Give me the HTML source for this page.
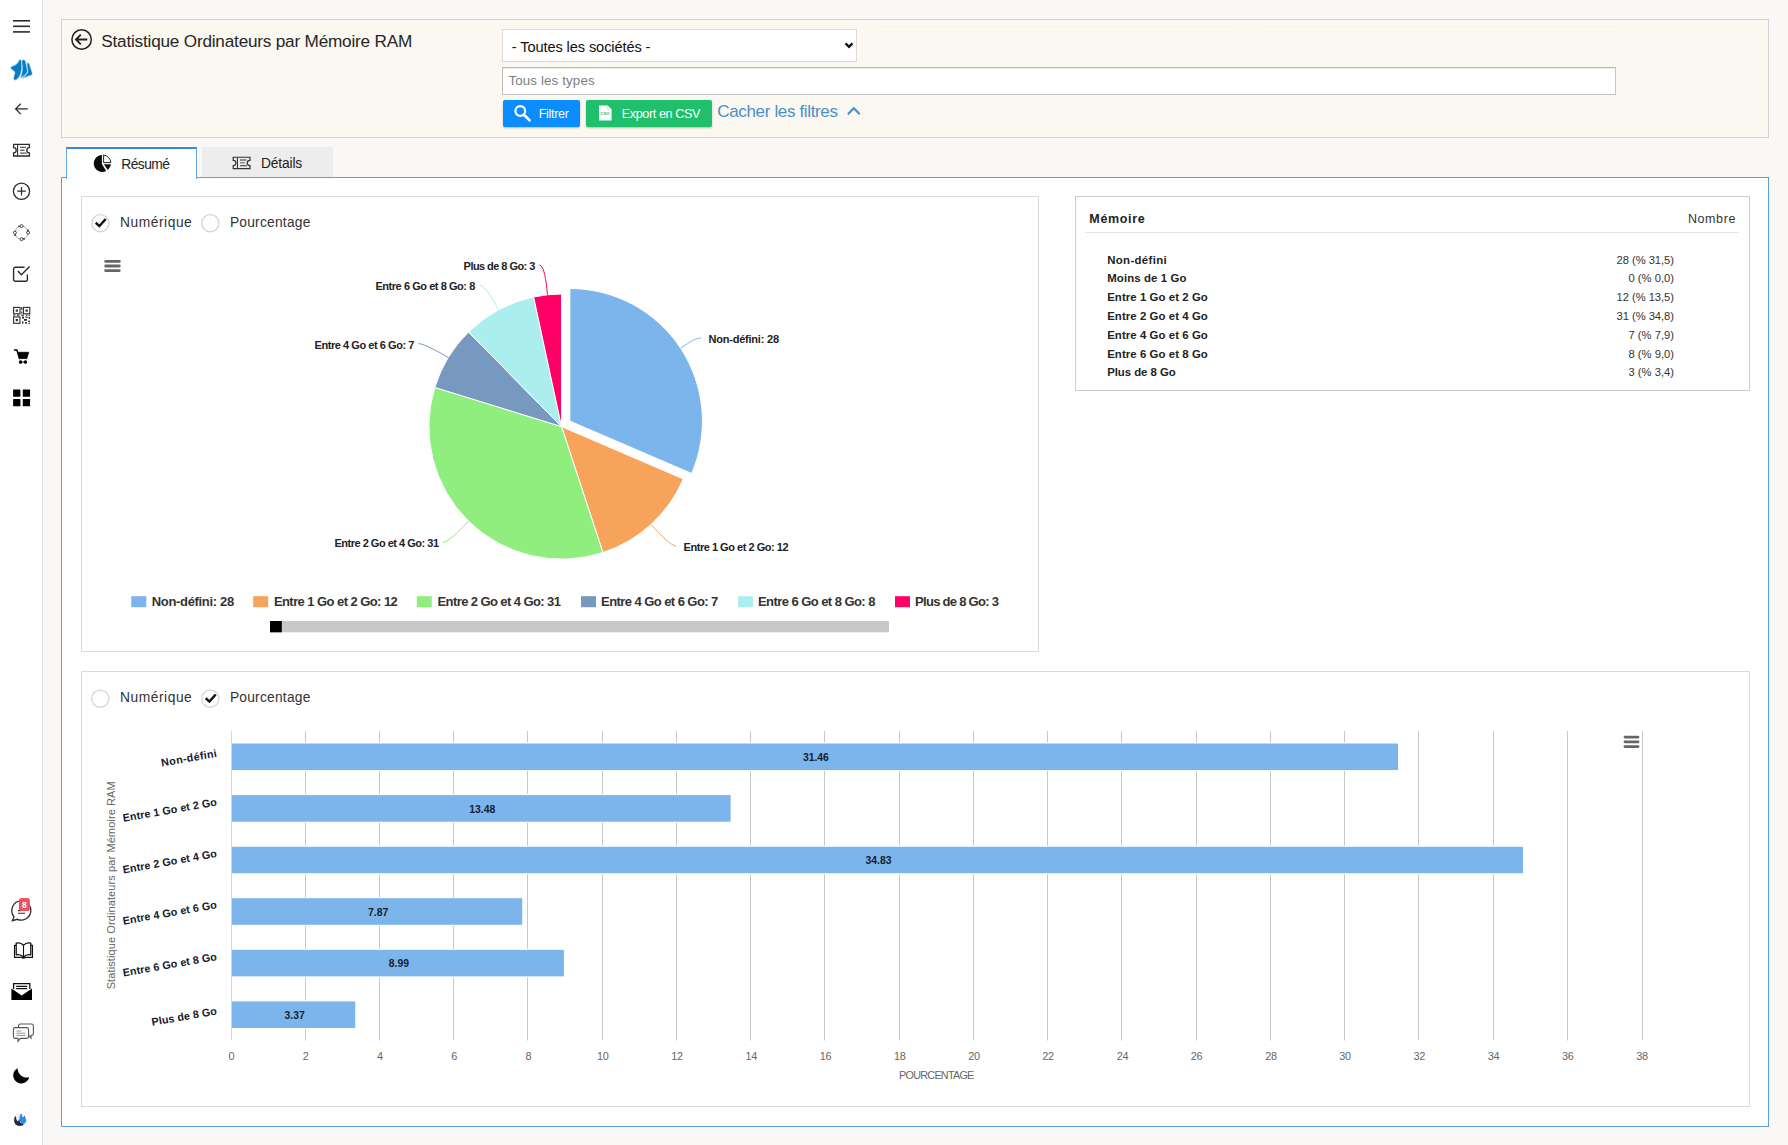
<!DOCTYPE html><html lang="fr"><head><meta charset="utf-8"><title>Statistique Ordinateurs par Mémoire RAM</title><style>
*{box-sizing:border-box;margin:0;padding:0}
html,body{width:1788px;height:1145px;overflow:hidden}
body{background:#f9f8f6;font-family:"Liberation Sans", sans-serif;position:relative;color:#222}
.abs{position:absolute}
.t{position:absolute;white-space:pre;line-height:1}
#side{position:absolute;left:0;top:0;width:43px;height:1145px;background:#fff;border-right:1px solid #e4e4e4}
#hdr{position:absolute;left:61px;top:19px;width:1708px;height:119px;background:#fbf8f1;border:1px solid #d2d2ce}
#content{position:absolute;left:61px;top:177px;width:1708px;height:950px;background:#fff;border:1px solid #5a9fd8}
.box{position:absolute;background:#fff;border:1px solid #dadada}
svg{position:absolute;left:0;top:0;overflow:visible}
svg text{font-family:"Liberation Sans", sans-serif;white-space:pre}
</style></head><body>
<nav id="side"></nav>
<svg width="43" height="1145" viewBox="0 0 43 1145"><path d="M13 20.8 H30" stroke="#2b2b2b" stroke-width="1.6"/><path d="M13 26.3 H30" stroke="#2b2b2b" stroke-width="1.6"/><path d="M13 31.9 H30" stroke="#2b2b2b" stroke-width="1.6"/><g fill="#0b7cc1" stroke="#8fd3f7" stroke-width="1.3" paint-order="stroke" stroke-linejoin="round"><path d="M19.7 60 C20.6 59.6 21 60.4 21 61.4 C21.6 66 21.4 71.5 19.6 75.6 C18.4 77.8 16.6 79.4 15.3 79.8 C14.2 79.8 13.7 79 14 77.6 C14.4 75.6 15.4 73.8 15.2 72.2 C14.6 70.4 12.2 69.6 11.3 68.4 C10.9 67.6 11.4 67 12.4 66.6 C16 65.6 18.2 63.6 19.7 60 Z"/><path d="M22.2 61.6 C22.6 60.4 23.2 59.9 23.8 60.1 C24.6 60.3 24.9 60.8 25.1 61.6 L27 70.4 C27.2 72.4 25.6 74.4 22.8 76 L21 77.6 C22.4 74 23 70 22.9 66.6 Z"/><path d="M27.2 63.8 C27.4 63.2 27.9 63 28.4 63.4 C28.8 63.8 29 64.2 29.1 64.8 L32 73.6 C32.1 74.2 31.8 74.6 31.2 74.8 L22.4 77.8 C25.6 76.2 28.6 73.8 28.3 70.8 Z"/></g><path d="M27.8 108.9 H15.6 M20.8 103.7 L15.6 108.9 L20.8 114.1" fill="none" stroke="#2b2b2b" stroke-width="1.3"/><g fill="none" stroke="#2b2b2b" stroke-width="1.3"><path d="M13.6 144.4 H29.4 V147.6 A2.6 2.6 0 0 0 29.4 152.8 V156 H13.6 V152.8 A2.6 2.6 0 0 0 13.6 147.6 Z"/><path d="M17.6 144.4 V156" stroke-width="1.1"/><path d="M20 147.3 H26 M20 150.2 H24.6 M20 153.1 H26.6" stroke-width="1"/></g><circle cx="21.5" cy="191.2" r="8.1" fill="none" stroke="#2b2b2b" stroke-width="1.3"/><path d="M17.2 191.2 H25.8 M21.5 186.9 V195.5" stroke="#2b2b2b" stroke-width="1.2"/><circle cx="21.5" cy="232.65" r="6.6" fill="none" stroke="#777" stroke-width="0.6"/><circle cx="21.5" cy="226.1" r="1.5" fill="#fff" stroke="#333" stroke-width="0.9"/><circle cx="28.1" cy="232.7" r="1.5" fill="#fff" stroke="#333" stroke-width="0.9"/><circle cx="21.5" cy="239.2" r="1.5" fill="#fff" stroke="#333" stroke-width="0.9"/><circle cx="14.9" cy="232.7" r="1.5" fill="#fff" stroke="#333" stroke-width="0.9"/><path d="M20.3 226.2 L18.2 225.3 L18.6 227.6 Z M28 231.5 L28.9 229.4 L26.6 229.8 Z M22.7 239.1 L24.8 240 L24.4 237.7 Z M15 233.9 L14.1 236 L16.4 235.6 Z" fill="#222"/><path d="M27.4 274.6 V279.4 A1.8 1.8 0 0 1 25.6 281.2 H15.4 A1.8 1.8 0 0 1 13.6 279.4 V269 A1.8 1.8 0 0 1 15.4 267.2 H24.6" fill="none" stroke="#2b2b2b" stroke-width="1.4"/><path d="M17.8 270.9 L21.4 274.7 L29.6 266.6" fill="none" stroke="#2b2b2b" stroke-width="1.4"/><g fill="none" stroke="#2b2b2b" stroke-width="1.1"><rect x="13.6" y="307.4" width="6.4" height="6.4"/><rect x="23.4" y="307.4" width="6.4" height="6.4"/><rect x="13.6" y="316.9" width="6.4" height="6.4"/></g><g fill="#2b2b2b"><rect x="15.7" y="309.5" width="2.2" height="2.2"/><rect x="25.5" y="309.5" width="2.2" height="2.2"/><rect x="15.7" y="319" width="2.2" height="2.2"/><rect x="21.2" y="307" width="1.1" height="3"/><rect x="21.2" y="311.5" width="1.1" height="2"/><rect x="13.2" y="314.6" width="2" height="1.1"/><rect x="17" y="314.6" width="2.4" height="1.1"/><rect x="21" y="314.6" width="3" height="1.1"/><rect x="26" y="314.6" width="1.6" height="1.1"/><rect x="28.6" y="314.6" width="1.6" height="1.1"/><rect x="22" y="316.6" width="2" height="2"/><rect x="25.4" y="316.6" width="2.2" height="1.2"/><rect x="28.6" y="316.8" width="1.4" height="2"/><rect x="24" y="319" width="3" height="1.8"/><rect x="22" y="321.4" width="1.4" height="2.2"/><rect x="25" y="322" width="2" height="1.6"/><rect x="28.2" y="320.6" width="1.8" height="1.4"/><rect x="28.4" y="322.8" width="1.6" height="1.1"/></g><path d="M14.5 350.1 H16.9 L19.5 358.6" fill="none" stroke="#000" stroke-width="1.5" stroke-linecap="round" stroke-linejoin="round"/><path d="M18 352.3 H28.7 L26.8 358.6 H19.8 Z" fill="#000" stroke="#000" stroke-width="0.8" stroke-linejoin="round"/><circle cx="20.6" cy="362.1" r="1.8" fill="#000"/><circle cx="25.4" cy="362.1" r="1.8" fill="#000"/><path d="M20.6 362.1 H25.4" stroke="#000" stroke-width="0.8"/><rect x="13.1" y="389.5" width="7.3" height="7.3" rx="0.5" fill="#000"/><rect x="22.8" y="389.5" width="7.3" height="7.3" rx="0.5" fill="#000"/><rect x="13.1" y="398.9" width="7.3" height="7.3" rx="0.5" fill="#000"/><rect x="22.8" y="398.9" width="7.3" height="7.3" rx="0.5" fill="#000"/><path d="M21.2 900.9 A9.6 9.6 0 1 1 17.4 919.3 L12.4 920.7 L14 916.6 A9.6 9.6 0 0 1 21.2 900.9 Z" fill="none" stroke="#2b2b2b" stroke-width="1.3"/><path d="M18 913.2 H25 M18 910.6 H21" stroke="#2b2b2b" stroke-width="1.1"/><rect x="18.9" y="897.9" width="11" height="13.1" rx="2.6" fill="#ee5361"/><text x="24.4" y="907.7" font-size="8.4" font-weight="700" fill="#fff" text-anchor="middle" font-family="Liberation Sans, sans-serif">8</text><g fill="none" stroke="#111" stroke-width="1.3" stroke-linejoin="round"><path d="M23.5 945.4 C21.2 942.8 18 942.7 16.2 943.2 V954.8 C18.8 954.2 21.6 955 23.5 957 C25.4 955 28.2 954.2 30.8 954.8 V943.2 C29 942.7 25.8 942.8 23.5 945.4 Z"/><path d="M23.5 945.4 V956.6" stroke-width="1.1"/><path d="M16.2 945.4 H14.5 V957.4 H21.8 M30.8 945.4 H32.5 V957.4 H25.2" stroke-width="1.1"/><path d="M21.6 957.3 Q23.5 958.4 25.4 957.3" stroke-width="1.6"/></g><path d="M13.6 989 V983.6 H29.8 V989" fill="none" stroke="#111" stroke-width="1.3"/><path d="M16.2 986.4 H27.2 M16.2 988.6 H27.2" stroke="#111" stroke-width="1.2"/><path d="M11.4 988.6 L21.7 995.6 L32 988.6 V1000 H11.4 Z" fill="#000"/><g fill="none" stroke="#555" stroke-width="1.1"><path d="M18.6 1027.4 V1025.8 A1.8 1.8 0 0 1 20.4 1024 H31.6 A1.8 1.8 0 0 1 33.4 1025.8 V1033.6 A1.8 1.8 0 0 1 31.6 1035.4 H31 V1038 L28.8 1035.6"/><path d="M15.2 1027.6 H26.8 A1.8 1.8 0 0 1 28.6 1029.4 V1036.6 A1.8 1.8 0 0 1 26.8 1038.4 H20.4 L18 1041.2 V1038.4 H15.2 A1.8 1.8 0 0 1 13.4 1036.6 V1029.4 A1.8 1.8 0 0 1 15.2 1027.6 Z" fill="#fff"/><path d="M16.4 1031 H21.4 M16.4 1033.2 H25.4 M16.4 1035.4 H25.4" stroke-width="0.9" stroke="#888"/></g><path d="M17.6 1068.2 A8.1 8.1 0 1 0 29.2 1077.3 A9.2 9.2 0 0 1 17.6 1068.2 Z" fill="#000"/><circle cx="20.1" cy="1119.6" r="6.6" fill="#f1f1f3"/><path d="M14.6 1117 L15.6 1116 L16.6 1120 L18 1121.5 L19.4 1119 L20.4 1123 L24 1123.6 L22.6 1125.6 L18.6 1126 L15.4 1124.4 L14 1121 Z" fill="#2a2740"/><path d="M19.6 1116.6 L20.8 1114.4 L22 1116 L23 1117.6 L24.4 1116.2 L25.8 1118.4 L26.2 1121.6 L24.6 1123.6 L21 1123 L19.4 1119.6 Z" fill="#2590ea"/><path d="M20.4 1114.2 L21.6 1114 L21.6 1116 Z M24 1116 L25 1116 L24.8 1117.4 Z" fill="#2a2740"/></svg>
<header id="hdr"></header>
<span class="t" style="left:101.3px;top:33px;font-size:17.2px;font-weight:400;color:#262626;letter-spacing:-0.214px;">Statistique Ordinateurs par Mémoire RAM</span>
<svg width="1788" height="140" viewBox="0 0 1788 140"><circle cx="81.6" cy="39.5" r="9.7" fill="none" stroke="#222" stroke-width="1.5"/><path d="M87.3 39.5 H76.5 M80.8 34.6 L76 39.5 L80.8 44.4" fill="none" stroke="#222" stroke-width="1.9"/></svg>
<div class="abs" style="left:881px;top:29px;width:355px;height:1px;background:#fffefb"></div><div class="abs" style="left:1260px;top:29px;width:356px;height:1px;background:#fffefb"></div>
<div class="abs" style="left:502px;top:29px;width:355px;height:33px;background:#fff;border:1px solid #dedcd8"></div>
<span class="t" style="left:511.8px;top:40px;font-size:14.6px;font-weight:400;color:#111;letter-spacing:-0.099px;">- Toutes les sociétés -</span>
<svg width="1788" height="140" viewBox="0 0 1788 140"><path d="M845.5 43.4 L849 46.9 L852.5 43.4" fill="none" stroke="#111" stroke-width="2.3"/></svg>
<div class="abs" style="left:502px;top:67px;width:1114px;height:28px;background:#fff;border:1px solid #c6c4c0;border-top-color:#b9b7b3;border-left-color:#bebcb8;box-shadow:inset 0 1px 0 #efefef"></div>
<span class="t" style="left:508.5px;top:74px;font-size:13.33px;font-weight:400;color:#7d7d7d;letter-spacing:0.127px;">Tous les types</span>
<div class="abs" style="left:503px;top:100px;width:77px;height:27px;background:#0b8cff;border-radius:2px;box-shadow:0 1px 2px rgba(0,0,0,.25)"></div>
<svg width="1788" height="140" viewBox="0 0 1788 140"><circle cx="520.3" cy="111" r="4.9" fill="none" stroke="#fff" stroke-width="2.2"/><path d="M523.9 114.8 L529.6 120.4" stroke="#fff" stroke-width="2.6" stroke-linecap="round"/></svg>
<span class="t" style="left:538.7px;top:108px;font-size:12.6px;font-weight:400;color:#fff;letter-spacing:-0.331px;">Filtrer</span>
<div class="abs" style="left:586px;top:100px;width:126px;height:27px;background:#20bf6b;border-radius:2px;box-shadow:0 1px 2px rgba(0,0,0,.25)"></div>
<svg width="1788" height="140" viewBox="0 0 1788 140"><path d="M599 105.4 H607.6 L611.6 109.4 V120.5 H599 Z" fill="#fff"/><path d="M607.6 105.4 V109.4 H611.6" fill="#d8f3e4" stroke="#bfe9d2" stroke-width=".6"/><text x="600.3" y="114.5" font-size="4.4" font-weight="700" fill="#20bf6b">CSV</text></svg>
<span class="t" style="left:621.7px;top:108px;font-size:12.6px;font-weight:400;color:#fff;letter-spacing:-0.376px;">Export en CSV</span>
<span class="t" style="left:717.3px;top:103px;font-size:17px;font-weight:400;color:#4a8fc8;letter-spacing:-0.348px;">Cacher les filtres</span>
<svg width="1788" height="140" viewBox="0 0 1788 140"><path d="M848.6 113.6 L853.8 108.2 L859 113.6" fill="none" stroke="#4a8fc8" stroke-width="2.2" stroke-linecap="round" stroke-linejoin="round"/></svg>
<div class="abs" style="left:202px;top:147px;width:131px;height:30px;background:#ededed"></div>
<main id="content"></main>
<div class="abs" style="left:66px;top:147px;width:131px;height:32px;background:#fff;border:1px solid #62a8e5;border-top:2px solid #3a8ad2;border-bottom:0"></div>
<span class="t" style="left:121.3px;top:158px;font-size:13.8px;font-weight:400;color:#222;letter-spacing:-0.535px;">Résumé</span>
<span class="t" style="left:261.0px;top:157px;font-size:13.8px;font-weight:400;color:#222;letter-spacing:-0.165px;">Détails</span>
<svg width="1788" height="200" viewBox="0 0 1788 200"><path d="M101.9 155 A8.45 8.45 0 1 0 106.2 170.9 L101.9 163.9 Z" fill="#0c0c0c"/><path d="M103.6 155 A8.45 8.45 0 0 1 110.9 162.6 H103.6 Z" fill="#fff" stroke="#222" stroke-width="1"/><path d="M103.9 164.2 H110.9 A8.45 8.45 0 0 1 107.7 170 Z" fill="#0c0c0c"/><g transform="translate(233.2 157.2) scale(1.063 0.983)" fill="none" stroke="#333" stroke-width="1.15"><path d="M0 0 H15.8 V3.2 A2.6 2.6 0 0 0 15.8 8.4 V11.6 H0 V8.4 A2.6 2.6 0 0 0 0 3.2 Z"/><path d="M4 0 V11.6" stroke-width="1"/><path d="M6.4 2.9 H12.4 M6.4 5.8 H11 M6.4 8.7 H13" stroke-width="0.95"/></g></svg>
<section class="box" style="left:81px;top:196px;width:958px;height:456px"></section>
<section class="box" style="left:1075px;top:196px;width:675px;height:195px;border-color:#ccc"></section>
<section class="box" style="left:81px;top:671px;width:1669px;height:436px"></section>
<svg width="1788" height="1145" viewBox="0 0 1788 1145"><circle cx="100.3" cy="223.2" r="8.6" fill="#fff" stroke="#d6d6d6" stroke-width="1.4"/><path d="M95.7 222.8 L99.4 226.1 L105.7 219.0" fill="none" stroke="#111" stroke-width="2.5"/><circle cx="210.3" cy="223.2" r="8.6" fill="#fff" stroke="#d6d6d6" stroke-width="1.4"/><circle cx="100.3" cy="698.7" r="8.6" fill="#fff" stroke="#d6d6d6" stroke-width="1.4"/><circle cx="210.3" cy="698.7" r="8.6" fill="#fff" stroke="#d6d6d6" stroke-width="1.4"/><path d="M205.7 698.3 L209.4 701.6 L215.7 694.5" fill="none" stroke="#111" stroke-width="2.5"/><path d="M569.85 421.10 L569.85 288.50 A132.6 132.6 0 0 1 691.68 473.46 Z" fill="#7cb5ec" stroke="#fff" stroke-width="1" stroke-linejoin="round"/>
<path d="M561.50 426.60 L683.32 478.96 A132.6 132.6 0 0 1 602.92 552.56 Z" fill="#f7a35c" stroke="#fff" stroke-width="1" stroke-linejoin="round"/>
<path d="M561.50 426.60 L602.92 552.56 A132.6 132.6 0 0 1 434.82 387.41 Z" fill="#90ee7e" stroke="#fff" stroke-width="1" stroke-linejoin="round"/>
<path d="M561.50 426.60 L434.82 387.41 A132.6 132.6 0 0 1 468.57 332.01 Z" fill="#7798bf" stroke="#fff" stroke-width="1" stroke-linejoin="round"/>
<path d="M561.50 426.60 L468.57 332.01 A132.6 132.6 0 0 1 533.63 296.96 Z" fill="#aaeeee" stroke="#fff" stroke-width="1" stroke-linejoin="round"/>
<path d="M561.50 426.60 L533.63 296.96 A132.6 132.6 0 0 1 561.50 294.00 Z" fill="#ff0066" stroke="#fff" stroke-width="1" stroke-linejoin="round"/>
<path d="M701.0 338.0 C696.0 338.0 690.6 341.6 685.6 344.9 L680.6 348.2" fill="none" stroke="#7cb5ec" stroke-width="1"/>
<text x="708.5" y="343.0" font-size="11" font-weight="700" fill="#222" text-anchor="start" textLength="70.5" lengthAdjust="spacing" >Non-défini: 28</text>
<path d="M676.1 546.0 C671.1 546.0 659.1 533.3 655.1 528.8 L651.0 524.4" fill="none" stroke="#f7a35c" stroke-width="1"/>
<text x="683.6" y="551.0" font-size="11" font-weight="700" fill="#222" text-anchor="start" textLength="104.9" lengthAdjust="spacing" >Entre 1 Go et 2 Go: 12</text>
<path d="M443.0 542.3 C448.0 542.3 460.2 529.7 464.4 525.5 L468.6 521.2" fill="none" stroke="#90ee7e" stroke-width="1"/>
<text x="334.5" y="547.3" font-size="11" font-weight="700" fill="#222" text-anchor="start" textLength="104.5" lengthAdjust="spacing" >Entre 2 Go et 4 Go: 31</text>
<path d="M418.4 343.6 C423.4 343.6 438.0 351.4 443.1 354.5 L448.3 357.6" fill="none" stroke="#7798bf" stroke-width="1"/>
<text x="314.5" y="348.6" font-size="11" font-weight="700" fill="#222" text-anchor="start" textLength="99.9" lengthAdjust="spacing" >Entre 4 Go et 6 Go: 7</text>
<path d="M479.3 285.0 C484.3 285.0 492.9 299.3 495.8 304.6 L498.6 309.9" fill="none" stroke="#aaeeee" stroke-width="1"/>
<text x="375.4" y="290.0" font-size="11" font-weight="700" fill="#222" text-anchor="start" textLength="99.9" lengthAdjust="spacing" >Entre 6 Go et 8 Go: 8</text>
<path d="M539.3 265.0 C544.3 265.0 546.2 282.8 546.9 288.8 L547.5 294.7" fill="none" stroke="#ff0066" stroke-width="1"/>
<text x="463.6" y="270.0" font-size="11" font-weight="700" fill="#222" text-anchor="start" textLength="71.7" lengthAdjust="spacing" >Plus de 8 Go: 3</text>
<rect x="131.3" y="596.2" width="15" height="11" fill="#7cb5ec"/>
<text x="151.7" y="606.0" font-size="13" font-weight="700" fill="#333" text-anchor="start" textLength="82.5" lengthAdjust="spacing" >Non-défini: 28</text>
<rect x="253.2" y="596.2" width="15" height="11" fill="#f7a35c"/>
<text x="273.9" y="606.0" font-size="13" font-weight="700" fill="#333" text-anchor="start" textLength="123.9" lengthAdjust="spacing" >Entre 1 Go et 2 Go: 12</text>
<rect x="416.8" y="596.2" width="15" height="11" fill="#90ee7e"/>
<text x="437.5" y="606.0" font-size="13" font-weight="700" fill="#333" text-anchor="start" textLength="123.4" lengthAdjust="spacing" >Entre 2 Go et 4 Go: 31</text>
<rect x="581.0" y="596.2" width="15" height="11" fill="#7798bf"/>
<text x="601.1" y="606.0" font-size="13" font-weight="700" fill="#333" text-anchor="start" textLength="117.2" lengthAdjust="spacing" >Entre 4 Go et 6 Go: 7</text>
<rect x="738.1" y="596.2" width="15" height="11" fill="#aaeeee"/>
<text x="758.0" y="606.0" font-size="13" font-weight="700" fill="#333" text-anchor="start" textLength="117.4" lengthAdjust="spacing" >Entre 6 Go et 8 Go: 8</text>
<rect x="895.0" y="596.2" width="15" height="11" fill="#ff0066"/>
<text x="915.1" y="606.0" font-size="13" font-weight="700" fill="#333" text-anchor="start" textLength="83.9" lengthAdjust="spacing" >Plus de 8 Go: 3</text>
<rect x="270" y="621" width="619" height="11.3" fill="#c8c8c8"/>
<rect x="270" y="621" width="11.8" height="11.3" fill="#000"/>
<path d="M105.7 261.35 H119.3" stroke="#666" stroke-width="2.8" stroke-linecap="round"/>
<path d="M105.7 266.0 H119.3" stroke="#666" stroke-width="2.8" stroke-linecap="round"/>
<path d="M105.7 270.65 H119.3" stroke="#666" stroke-width="2.8" stroke-linecap="round"/><path d="M305.5 731 V1040.5" stroke="#c8c8c8" stroke-width="1"/>
<path d="M379.5 731 V1040.5" stroke="#c8c8c8" stroke-width="1"/>
<path d="M453.5 731 V1040.5" stroke="#c8c8c8" stroke-width="1"/>
<path d="M527.5 731 V1040.5" stroke="#c8c8c8" stroke-width="1"/>
<path d="M602.5 731 V1040.5" stroke="#c8c8c8" stroke-width="1"/>
<path d="M676.5 731 V1040.5" stroke="#c8c8c8" stroke-width="1"/>
<path d="M750.5 731 V1040.5" stroke="#c8c8c8" stroke-width="1"/>
<path d="M824.5 731 V1040.5" stroke="#c8c8c8" stroke-width="1"/>
<path d="M899.5 731 V1040.5" stroke="#c8c8c8" stroke-width="1"/>
<path d="M973.5 731 V1040.5" stroke="#c8c8c8" stroke-width="1"/>
<path d="M1047.5 731 V1040.5" stroke="#c8c8c8" stroke-width="1"/>
<path d="M1121.5 731 V1040.5" stroke="#c8c8c8" stroke-width="1"/>
<path d="M1196.5 731 V1040.5" stroke="#c8c8c8" stroke-width="1"/>
<path d="M1270.5 731 V1040.5" stroke="#c8c8c8" stroke-width="1"/>
<path d="M1344.5 731 V1040.5" stroke="#c8c8c8" stroke-width="1"/>
<path d="M1418.5 731 V1040.5" stroke="#c8c8c8" stroke-width="1"/>
<path d="M1493.5 731 V1040.5" stroke="#c8c8c8" stroke-width="1"/>
<path d="M1567.5 731 V1040.5" stroke="#c8c8c8" stroke-width="1"/>
<path d="M1642.5 731 V1040.5" stroke="#c8c8c8" stroke-width="1"/>
<rect x="231.5" y="743.0" width="1167.0" height="27.6" fill="#7cb5ec" stroke="#fff" stroke-width="1"/>
<text x="815.9" y="761.1" font-size="10.4" font-weight="700" fill="#16202e" text-anchor="middle" >31.46</text>
<g transform="translate(217.3 756.8) rotate(-10)"><text x="-56.3" y="0.0" font-size="10.8" font-weight="700" fill="#16202e" text-anchor="start" textLength="56.3" lengthAdjust="spacing" >Non-défini</text></g>
<rect x="231.5" y="794.6" width="499.6" height="27.6" fill="#7cb5ec" stroke="#fff" stroke-width="1"/>
<text x="482.2" y="812.7" font-size="10.4" font-weight="700" fill="#16202e" text-anchor="middle" >13.48</text>
<g transform="translate(217.3 805.3) rotate(-10)"><text x="-95.3" y="0.0" font-size="10.8" font-weight="700" fill="#16202e" text-anchor="start" textLength="95.3" lengthAdjust="spacing" >Entre 1 Go et 2 Go</text></g>
<rect x="231.5" y="846.2" width="1292.1" height="27.6" fill="#7cb5ec" stroke="#fff" stroke-width="1"/>
<text x="878.5" y="864.3" font-size="10.4" font-weight="700" fill="#16202e" text-anchor="middle" >34.83</text>
<g transform="translate(217.3 856.9) rotate(-10)"><text x="-95.3" y="0.0" font-size="10.8" font-weight="700" fill="#16202e" text-anchor="start" textLength="95.3" lengthAdjust="spacing" >Entre 2 Go et 4 Go</text></g>
<rect x="231.5" y="897.7" width="291.3" height="27.6" fill="#7cb5ec" stroke="#fff" stroke-width="1"/>
<text x="378.1" y="915.8" font-size="10.4" font-weight="700" fill="#16202e" text-anchor="middle" >7.87</text>
<g transform="translate(217.3 908.1) rotate(-10)"><text x="-95.3" y="0.0" font-size="10.8" font-weight="700" fill="#16202e" text-anchor="start" textLength="95.3" lengthAdjust="spacing" >Entre 4 Go et 6 Go</text></g>
<rect x="231.5" y="949.3" width="332.9" height="27.6" fill="#7cb5ec" stroke="#fff" stroke-width="1"/>
<text x="398.9" y="967.4" font-size="10.4" font-weight="700" fill="#16202e" text-anchor="middle" >8.99</text>
<g transform="translate(217.3 960.0) rotate(-10)"><text x="-95.3" y="0.0" font-size="10.8" font-weight="700" fill="#16202e" text-anchor="start" textLength="95.3" lengthAdjust="spacing" >Entre 6 Go et 8 Go</text></g>
<rect x="231.5" y="1000.9" width="124.3" height="27.6" fill="#7cb5ec" stroke="#fff" stroke-width="1"/>
<text x="294.6" y="1019.0" font-size="10.4" font-weight="700" fill="#16202e" text-anchor="middle" >3.37</text>
<g transform="translate(217.3 1014.4) rotate(-10)"><text x="-66.0" y="0.0" font-size="10.8" font-weight="700" fill="#16202e" text-anchor="start" textLength="66.0" lengthAdjust="spacing" >Plus de 8 Go</text></g>
<path d="M231.5 731 V1040.5" stroke="#ccd6eb" stroke-width="1"/>
<text x="231.5" y="1060.2" font-size="10.9" font-weight="400" fill="#666" text-anchor="middle" letter-spacing="-0.3">0</text>
<text x="305.7" y="1060.2" font-size="10.9" font-weight="400" fill="#666" text-anchor="middle" letter-spacing="-0.3">2</text>
<text x="380.0" y="1060.2" font-size="10.9" font-weight="400" fill="#666" text-anchor="middle" letter-spacing="-0.3">4</text>
<text x="454.2" y="1060.2" font-size="10.9" font-weight="400" fill="#666" text-anchor="middle" letter-spacing="-0.3">6</text>
<text x="528.5" y="1060.2" font-size="10.9" font-weight="400" fill="#666" text-anchor="middle" letter-spacing="-0.3">8</text>
<text x="602.7" y="1060.2" font-size="10.9" font-weight="400" fill="#666" text-anchor="middle" letter-spacing="-0.3">10</text>
<text x="676.9" y="1060.2" font-size="10.9" font-weight="400" fill="#666" text-anchor="middle" letter-spacing="-0.3">12</text>
<text x="751.2" y="1060.2" font-size="10.9" font-weight="400" fill="#666" text-anchor="middle" letter-spacing="-0.3">14</text>
<text x="825.4" y="1060.2" font-size="10.9" font-weight="400" fill="#666" text-anchor="middle" letter-spacing="-0.3">16</text>
<text x="899.7" y="1060.2" font-size="10.9" font-weight="400" fill="#666" text-anchor="middle" letter-spacing="-0.3">18</text>
<text x="973.9" y="1060.2" font-size="10.9" font-weight="400" fill="#666" text-anchor="middle" letter-spacing="-0.3">20</text>
<text x="1048.1" y="1060.2" font-size="10.9" font-weight="400" fill="#666" text-anchor="middle" letter-spacing="-0.3">22</text>
<text x="1122.4" y="1060.2" font-size="10.9" font-weight="400" fill="#666" text-anchor="middle" letter-spacing="-0.3">24</text>
<text x="1196.6" y="1060.2" font-size="10.9" font-weight="400" fill="#666" text-anchor="middle" letter-spacing="-0.3">26</text>
<text x="1270.9" y="1060.2" font-size="10.9" font-weight="400" fill="#666" text-anchor="middle" letter-spacing="-0.3">28</text>
<text x="1345.1" y="1060.2" font-size="10.9" font-weight="400" fill="#666" text-anchor="middle" letter-spacing="-0.3">30</text>
<text x="1419.3" y="1060.2" font-size="10.9" font-weight="400" fill="#666" text-anchor="middle" letter-spacing="-0.3">32</text>
<text x="1493.6" y="1060.2" font-size="10.9" font-weight="400" fill="#666" text-anchor="middle" letter-spacing="-0.3">34</text>
<text x="1567.8" y="1060.2" font-size="10.9" font-weight="400" fill="#666" text-anchor="middle" letter-spacing="-0.3">36</text>
<text x="1642.1" y="1060.2" font-size="10.9" font-weight="400" fill="#666" text-anchor="middle" letter-spacing="-0.3">38</text>
<text x="899.1" y="1079.0" font-size="10.8" font-weight="400" fill="#666" text-anchor="start" textLength="75.2" lengthAdjust="spacing" >POURCENTAGE</text>
<g transform="translate(115.4 989.3) rotate(-90)"><text x="0.0" y="0.0" font-size="11" font-weight="400" fill="#666" text-anchor="start" textLength="208.0" lengthAdjust="spacing" >Statistique Ordinateurs par Mémoire RAM</text></g>
<path d="M1625 737.05 H1638" stroke="#666" stroke-width="2.8" stroke-linecap="round"/>
<path d="M1625 741.8 H1638" stroke="#666" stroke-width="2.8" stroke-linecap="round"/>
<path d="M1625 746.55 H1638" stroke="#666" stroke-width="2.8" stroke-linecap="round"/></svg>
<span class="t" style="left:120.0px;top:216px;font-size:13.8px;font-weight:400;color:#333;letter-spacing:0.539px;">Numérique</span>
<span class="t" style="left:229.9px;top:216px;font-size:13.8px;font-weight:400;color:#333;letter-spacing:0.225px;">Pourcentage</span>
<span class="t" style="left:120.0px;top:691px;font-size:13.8px;font-weight:400;color:#333;letter-spacing:0.539px;">Numérique</span>
<span class="t" style="left:229.9px;top:691px;font-size:13.8px;font-weight:400;color:#333;letter-spacing:0.225px;">Pourcentage</span>
<span class="t" style="left:1089.3px;top:213px;font-size:12.5px;font-weight:700;color:#222;letter-spacing:0.666px;">Mémoire</span>
<span class="t" style="left:1687.9px;top:213px;font-size:12.5px;font-weight:400;color:#333;letter-spacing:0.606px;">Nombre</span>
<div class="abs" style="left:1085px;top:232px;width:654px;height:1px;background:#e4e4e4"></div>
<span class="t" style="left:1107.2px;top:255px;font-size:11.4px;font-weight:700;color:#222;letter-spacing:0.354px;">Non-défini</span>
<span class="t" style="left:1616.5px;top:255px;font-size:11.2px;font-weight:400;color:#333;letter-spacing:-0.034px;">28 (% 31,5)</span>
<span class="t" style="left:1107.2px;top:273px;font-size:11.4px;font-weight:700;color:#222;letter-spacing:0.121px;">Moins de 1 Go</span>
<span class="t" style="left:1628.5px;top:273px;font-size:11.2px;font-weight:400;color:#333;letter-spacing:0.014px;">0 (% 0,0)</span>
<span class="t" style="left:1107.2px;top:292px;font-size:11.4px;font-weight:700;color:#222;letter-spacing:0.072px;">Entre 1 Go et 2 Go</span>
<span class="t" style="left:1616.5px;top:292px;font-size:11.2px;font-weight:400;color:#333;letter-spacing:-0.034px;">12 (% 13,5)</span>
<span class="t" style="left:1107.2px;top:311px;font-size:11.4px;font-weight:700;color:#222;letter-spacing:0.072px;">Entre 2 Go et 4 Go</span>
<span class="t" style="left:1616.5px;top:311px;font-size:11.2px;font-weight:400;color:#333;letter-spacing:-0.034px;">31 (% 34,8)</span>
<span class="t" style="left:1107.2px;top:330px;font-size:11.4px;font-weight:700;color:#222;letter-spacing:0.072px;">Entre 4 Go et 6 Go</span>
<span class="t" style="left:1628.5px;top:330px;font-size:11.2px;font-weight:400;color:#333;letter-spacing:0.014px;">7 (% 7,9)</span>
<span class="t" style="left:1107.2px;top:349px;font-size:11.4px;font-weight:700;color:#222;letter-spacing:0.072px;">Entre 6 Go et 8 Go</span>
<span class="t" style="left:1628.5px;top:349px;font-size:11.2px;font-weight:400;color:#333;letter-spacing:0.014px;">8 (% 9,0)</span>
<span class="t" style="left:1107.2px;top:367px;font-size:11.4px;font-weight:700;color:#222;letter-spacing:-0.045px;">Plus de 8 Go</span>
<span class="t" style="left:1628.5px;top:367px;font-size:11.2px;font-weight:400;color:#333;letter-spacing:0.014px;">3 (% 3,4)</span>
</body></html>
